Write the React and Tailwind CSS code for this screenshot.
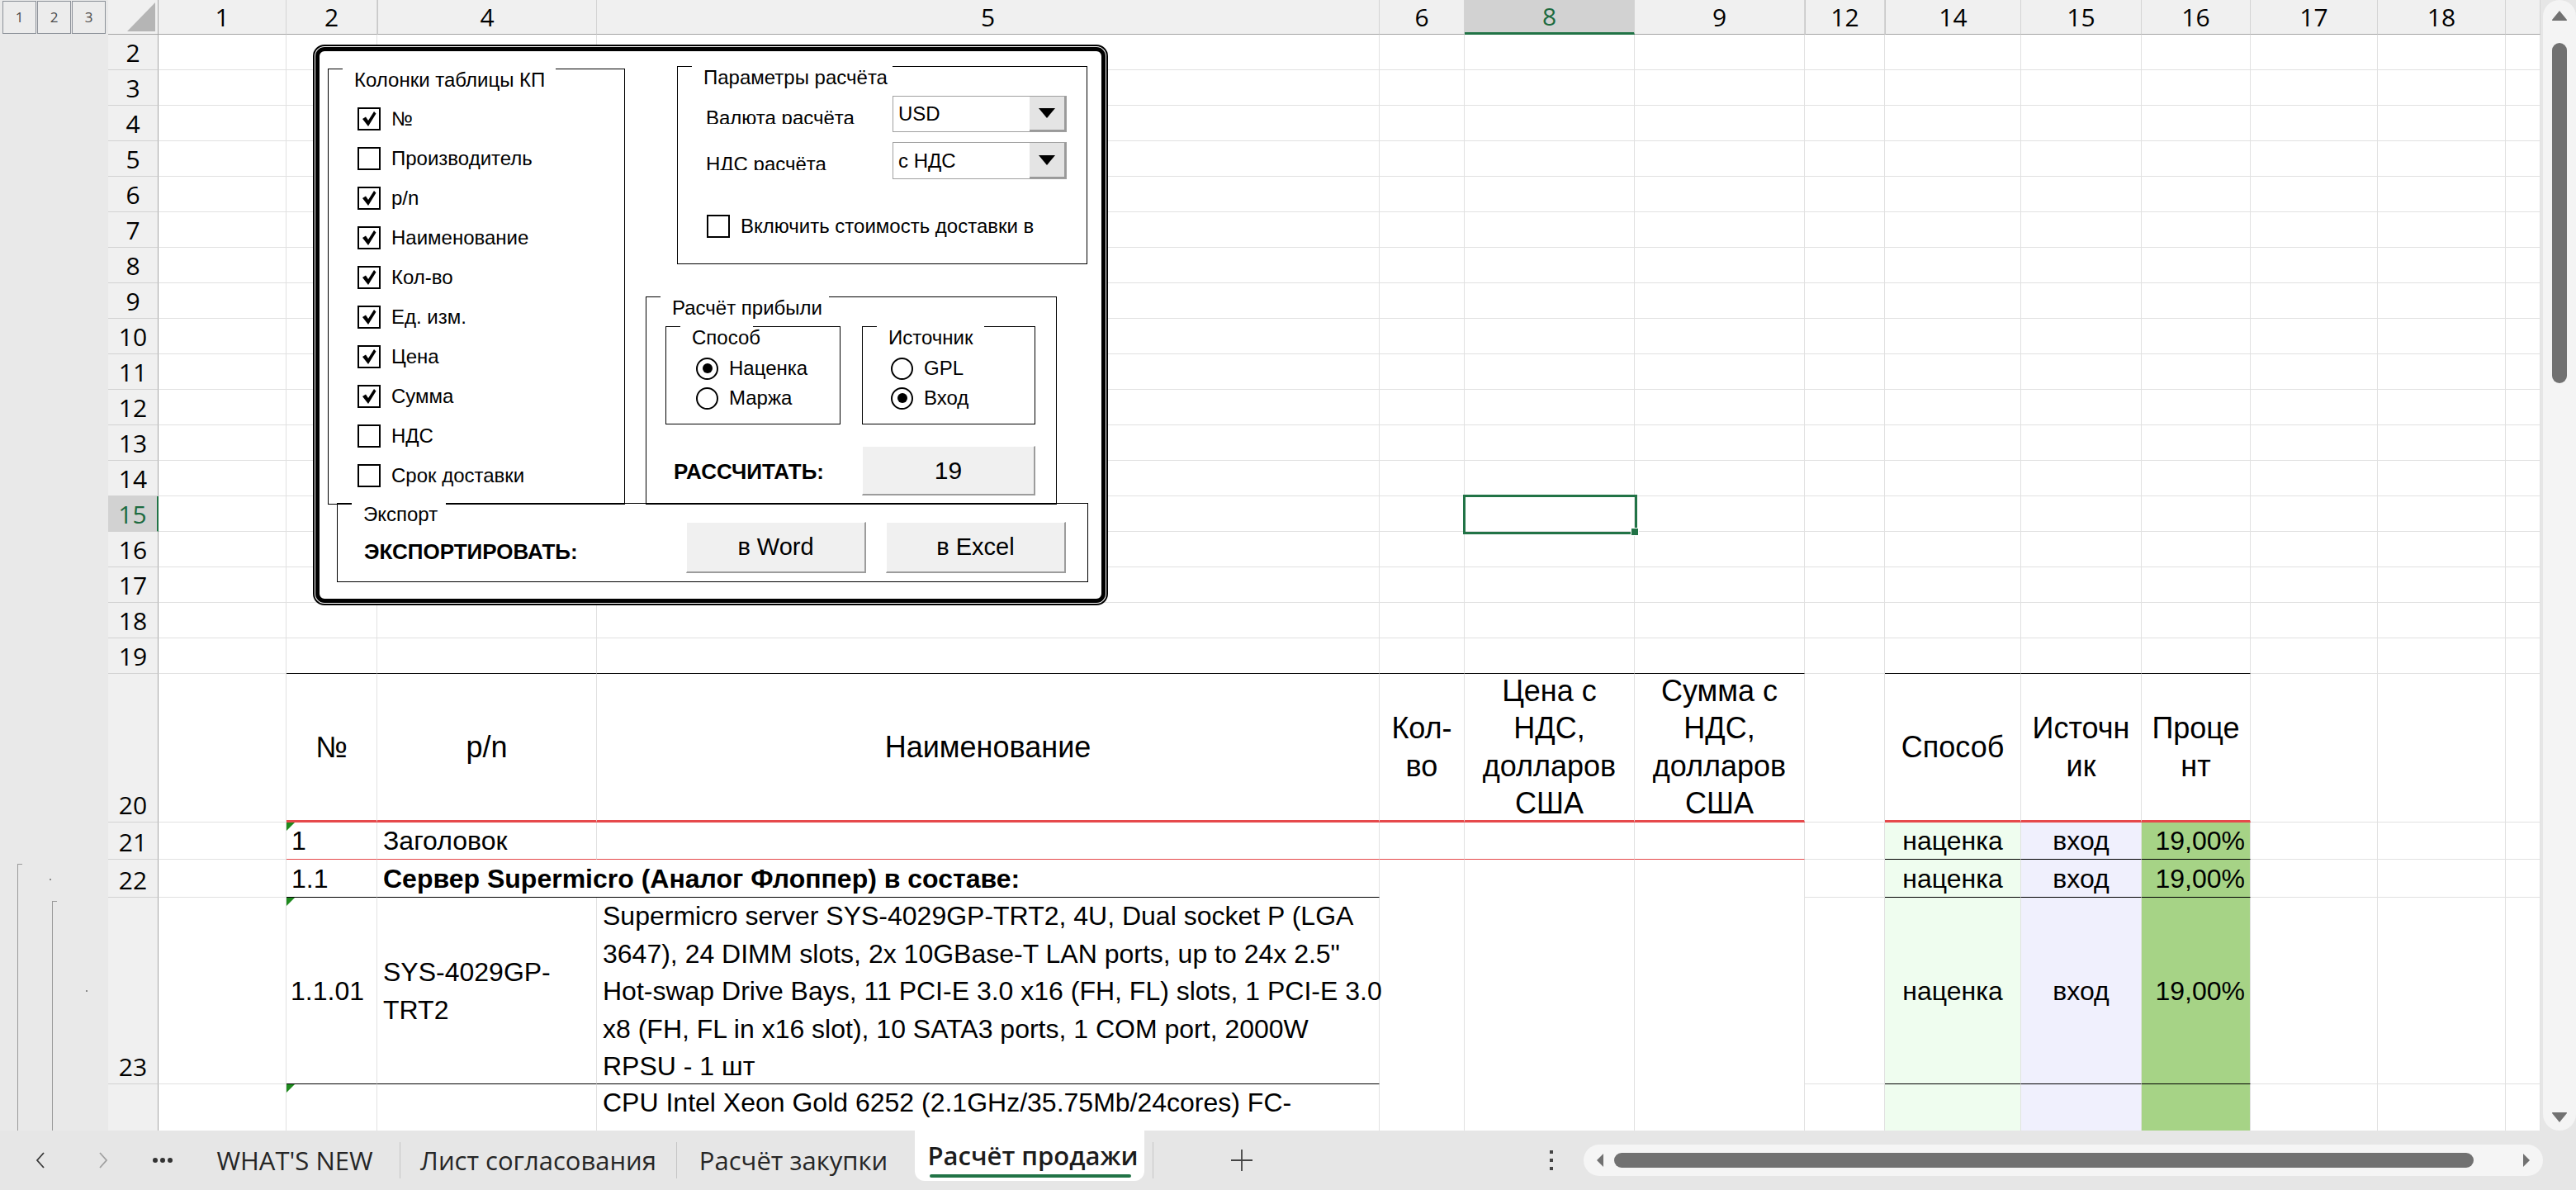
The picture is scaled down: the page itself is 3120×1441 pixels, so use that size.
import React from 'react';

// sheet columns (hidden ones show as a double line in the header)
const COLS = [
  { k: '1', w: 'w-[155px]' },
  { k: '2', w: 'w-[110px]' },
  { k: '4', w: 'w-[266px]', dbl: true },
  { k: '5', w: 'w-[948px]' },
  { k: '6', w: 'w-[103px]' },
  { k: '8', w: 'w-[206px]', sel: true },
  { k: '9', w: 'w-[206px]' },
  { k: '12', w: 'w-[97px]', dbl: true },
  { k: '14', w: 'w-[165px]', dbl: true },
  { k: '15', w: 'w-[146px]' },
  { k: '16', w: 'w-[132px]' },
  { k: '17', w: 'w-[154px]' },
  { k: '18', w: 'w-[155px]' },
  { k: '', w: 'w-[42px]' },
];

const BOTTOM = {
  g: 'border-b border-b-[#e1e1e1]',
  k: 'border-b border-b-black',
  R: 'border-b-[3px] border-b-[#e6494b]',
  r: 'border-b border-b-[#e6494b]',
  n: '',
};

const DATA = "font-['Liberation_Sans',Arial,sans-serif] text-[32px] text-black";

function Flag() {
  return <span className="absolute left-0 top-0 h-0 w-0 border-t-[10px] border-r-[10px] border-t-[#1e8a1e] border-r-transparent" />;
}

function SheetRow({ n, h, cells = {}, head = '' }) {
  return (
    <div className={`flex shrink-0 ${h}`}>
      <div className={`w-[61px] shrink-0 flex items-end justify-center pb-px leading-[38px] border-b border-b-[#d2d2d2] ${head || 'bg-[#f0f0f0] border-r border-r-[#a6a6a6]'}`}>
        {n}
      </div>
      {COLS.map((c, i) => {
        const s = cells[i] || {};
        return (
          <div
            key={i}
            className={`relative shrink-0 ${c.w} ${s.r === 'n' ? '' : 'border-r border-r-[#e1e1e1]'} ${BOTTOM[s.b || 'g']} ${s.cls || ''}`}
          >
            {s.children}
          </div>
        );
      })}
    </div>
  );
}

const hdr = (t) => (
  <div className="flex h-full items-center justify-center text-center font-['Liberation_Sans',Arial,sans-serif] text-[36px] leading-[45.5px] text-black">
    {t}
  </div>
);

const mid = (t, extra = '') => (
  <div className={`flex h-full items-center ${DATA} ${extra}`}>{t}</div>
);

function Check() {
  return (
    <svg width="18" height="20" viewBox="0 0 18 20">
      <polygon points="1,10 5,7.5 8,12 15,1 17.5,3.5 8,19" fill="#000" />
    </svg>
  );
}

function CheckBox({ on }) {
  return (
    <div className="flex h-[28px] w-[28px] shrink-0 items-center justify-center border-2 border-black bg-white">
      {on && <Check />}
    </div>
  );
}

function Radio({ on }) {
  return (
    <div className="flex h-[27px] w-[27px] shrink-0 items-center justify-center rounded-full border-2 border-black bg-white">
      {on && <div className="h-[12px] w-[12px] rounded-full bg-black" />}
    </div>
  );
}

function Frame({ title, tw, className = '', children }) {
  return (
    <div className={`relative border border-black ${className}`}>
      <div className={`absolute -top-px left-[17px] h-[28px] ${tw} bg-white pl-[14px] leading-[28px] whitespace-nowrap`}>
        {title}
      </div>
      {children}
    </div>
  );
}

function Combo({ value, h }) {
  return (
    <div className={`flex w-[211px] ${h} border border-[#a0a0a0] bg-white`}>
      <div className="flex flex-1 items-center pl-[6px]">{value}</div>
      <div className="flex w-[44px] items-center justify-center bg-[#e4e4e4] border-r-2 border-r-[#9a9a9a] border-b-2 border-b-[#9a9a9a]">
        <svg width="20" height="12" viewBox="0 0 20 12">
          <polygon points="0,0 20,0 10,12" fill="#000" />
        </svg>
      </div>
    </div>
  );
}

function Btn({ children, className = '' }) {
  return (
    <div className={`flex items-center justify-center bg-[#f0f0f0] border-t border-t-white border-l border-l-white border-r-2 border-r-[#9c9c9c] border-b-2 border-b-[#9c9c9c] ${className}`}>
      {children}
    </div>
  );
}

const COLUMNS_KP = [
  ['№', true],
  ['Производитель', false],
  ['p/n', true],
  ['Наименование', true],
  ['Кол-во', true],
  ['Ед. изм.', true],
  ['Цена', true],
  ['Сумма', true],
  ['НДС', false],
  ['Срок доставки', false],
];

function Dialog() {
  return (
    <div className="absolute left-[379px] top-[54px] z-20 h-[679px] w-[963px] rounded-[14px] border-2 border-black bg-white p-px font-['Liberation_Sans',Arial,sans-serif] text-[24px] text-black">
      <div className="flex h-full flex-col rounded-[11px] border-[5px] border-black">
        <div className="flex items-start">
          {/* Колонки таблицы КП */}
          <Frame title="Колонки таблицы КП" tw="w-[258px]" className="ml-[10px] mt-[21px] h-[528px] w-[360px]">
            <div className="flex flex-col pl-[35px] pt-[36px]">
              {COLUMNS_KP.map(([label, on]) => (
                <div key={label} className="flex h-[48px] items-center gap-[13px]">
                  <CheckBox on={on} />
                  <span>{label}</span>
                </div>
              ))}
            </div>
          </Frame>

          <div className="ml-[63px] mt-[18px] flex flex-col">
            {/* Параметры расчёта */}
            <Frame title="Параметры расчёта" tw="w-[243px]" className="h-[240px] w-[497px]">
              <div className="flex flex-col pl-[34px] pt-[35px]">
                <div className="flex items-start">
                  <div className="h-[34px] w-[226px] overflow-hidden">
                    <div className="mt-[12px] leading-[30px]">Валюта расчёта</div>
                  </div>
                  <Combo value="USD" h="h-[44px]" />
                </div>
                <div className="mt-[12px] flex items-start">
                  <div className="h-[34px] w-[226px] overflow-hidden">
                    <div className="mt-[12px] leading-[30px]">НДС расчёта</div>
                  </div>
                  <Combo value="с НДС" h="h-[45px]" />
                </div>
                <div className="mt-[39px] flex items-center gap-[13px] pl-px">
                  <CheckBox on={false} />
                  <span className="whitespace-nowrap">Включить стоимость доставки в</span>
                </div>
              </div>
            </Frame>

            {/* Расчёт прибыли */}
            <Frame title="Расчёт прибыли" tw="w-[204px]" className="-ml-[38px] mt-[39px] h-[252px] w-[498px]">
              <div className="flex flex-col pl-[23px] pt-[35px]">
                <div className="flex gap-[26px]">
                  <Frame title="Способ" tw="w-[88px]" className="h-[119px] w-[212px]">
                    <div className="flex flex-col pl-[36px] pt-[32px]">
                      <div className="flex h-[36px] items-center gap-[13px]"><Radio on /><span>Наценка</span></div>
                      <div className="flex h-[36px] items-center gap-[13px]"><Radio /><span>Маржа</span></div>
                    </div>
                  </Frame>
                  <Frame title="Источник" tw="w-[130px]" className="h-[119px] w-[210px]">
                    <div className="flex flex-col pl-[34px] pt-[32px]">
                      <div className="flex h-[36px] items-center gap-[13px]"><Radio /><span>GPL</span></div>
                      <div className="flex h-[36px] items-center gap-[13px]"><Radio on /><span>Вход</span></div>
                    </div>
                  </Frame>
                </div>
                <div className="mt-[26px] flex items-center">
                  <div className="w-[238px] pl-[10px] pt-[2px] text-[26px] font-bold">РАССЧИТАТЬ:</div>
                  <Btn className="h-[60px] w-[210px] text-[30px]">19</Btn>
                </div>
              </div>
            </Frame>
          </div>
        </div>

        {/* Экспорт */}
        <Frame title="Экспорт" tw="w-[114px]" className="-mt-[2px] ml-[21px] h-[96px] w-[910px]">
          <div className="flex items-start pl-[32px] pt-[22px]">
            <div className="mt-[21px] w-[390px] text-[26px] font-bold leading-[30px]">ЭКСПОРТИРОВАТЬ:</div>
            <div className="flex gap-[24px]">
              <Btn className="h-[62px] w-[218px] text-[29px]">в Word</Btn>
              <Btn className="h-[62px] w-[218px] text-[29px]">в Excel</Btn>
            </div>
          </div>
        </Frame>
      </div>
    </div>
  );
}

function bordered(idxs, b) {
  const o = {};
  idxs.forEach((i) => { o[i] = { b }; });
  return o;
}

const TABLE_IDX = [1, 2, 3, 4, 5, 6];
const CALC_IDX = [8, 9, 10];

function Sheet() {
  const plainRows = [];
  for (let n = 2; n <= 19; n++) {
    let cells = {};
    let head = '';
    if (n === 19) cells = bordered([...TABLE_IDX, ...CALC_IDX], 'k');
    if (n === 15) {
      head = 'bg-[#d2d2d2] text-[#1d6b40] border-r-2 border-r-[#217346]';
      cells = {
        5: {
          children: (
            <div className="absolute -left-[2px] -top-[2px] z-10 h-[48px] w-[211px] border-[3px] border-[#217346]">
              <div className="absolute -bottom-[5px] -right-[5px] h-[10px] w-[10px] border border-white bg-[#217346]" />
            </div>
          ),
        },
      };
    }
    plainRows.push(<SheetRow key={n} n={n} h="h-[43px]" cells={cells} head={head} />);
  }

  const green = 'bg-[#effdef]';
  const lav = 'bg-[#f0f0fd]';
  const pct = 'bg-[#a6d386]';

  return (
    <div className="flex w-[2946px] shrink-0 flex-col overflow-hidden font-['Open_Sans',sans-serif] text-[30px] text-black">
      {/* column header */}
      <div className="flex h-[42px] shrink-0 bg-[#f0f0f0]">
        <div className="relative w-[61px] shrink-0 border-r border-r-[#a6a6a6] border-b border-b-[#a5a5a5]">
          <svg className="absolute bottom-[3px] right-[3px]" width="34" height="35" viewBox="0 0 34 35">
            <polygon points="34,0 34,35 0,35" fill="#b5b5b5" />
          </svg>
        </div>
        {COLS.map((c) => (
          <div
            key={c.w + c.k}
            className={`flex shrink-0 items-center justify-center ${c.w} border-r border-r-[#d4d4d4] ${c.dbl ? 'border-l border-l-[#c8c8c8]' : ''} ${c.sel ? 'bg-[#d2d2d2] text-[#1d6b40] border-b-[3px] border-b-[#217346]' : 'border-b border-b-[#a5a5a5]'}`}
          >
            {c.k}
          </div>
        ))}
      </div>

      {plainRows}

      {/* row 20: table header */}
      <SheetRow
        n={20}
        h="h-[180px]"
        cells={{
          1: { b: 'R', children: hdr('№') },
          2: { b: 'R', children: hdr('p/n') },
          3: { b: 'R', children: hdr('Наименование') },
          4: { b: 'R', children: hdr(<>Кол-<br />во</>) },
          5: { b: 'R', children: hdr(<>Цена с<br />НДС,<br />долларов<br />США</>) },
          6: { b: 'R', children: hdr(<>Сумма с<br />НДС,<br />долларов<br />США</>) },
          8: { b: 'R', children: hdr('Способ') },
          9: { b: 'R', children: hdr(<>Источн<br />ик</>) },
          10: { b: 'R', children: hdr(<>Проце<br />нт</>) },
        }}
      />

      {/* row 21 */}
      <SheetRow
        n={21}
        h="h-[45px]"
        cells={{
          1: { b: 'r', children: <><Flag />{mid('1', 'pl-[6px]')}</> },
          2: { b: 'r', children: mid('Заголовок', 'pl-[7px] whitespace-nowrap') },
          3: { b: 'r' },
          4: { b: 'r' },
          5: { b: 'r' },
          6: { b: 'r' },
          8: { b: 'k', cls: green, children: mid('наценка', 'justify-center') },
          9: { b: 'k', cls: lav, children: mid('вход', 'justify-center') },
          10: { b: 'k', cls: pct, children: mid('19,00%', 'justify-end pr-[6px]') },
        }}
      />

      {/* row 22 */}
      <SheetRow
        n={22}
        h="h-[46px]"
        cells={{
          1: { b: 'k', children: mid('1.1', 'pl-[6px]') },
          2: { b: 'k', r: 'n', cls: 'z-[1]', children: mid('Сервер Supermicro (Аналог Флоппер) в составе:', 'pl-[7px] whitespace-nowrap font-bold') },
          3: { b: 'k' },
          4: { b: 'n' },
          5: { b: 'n' },
          6: { b: 'n' },
          8: { b: 'k', cls: green, children: mid('наценка', 'justify-center') },
          9: { b: 'k', cls: lav, children: mid('вход', 'justify-center') },
          10: { b: 'k', cls: pct, children: mid('19,00%', 'justify-end pr-[6px]') },
        }}
      />

      {/* row 23 */}
      <SheetRow
        n={23}
        h="h-[226px]"
        cells={{
          1: { b: 'k', children: <><Flag />{mid('1.1.01', 'pl-[5px]')}</> },
          2: { b: 'k', children: mid(<>SYS-4029GP-<br />TRT2</>, 'pl-[7px] leading-[46px]') },
          3: {
            b: 'k',
            children: (
              <div className={`${DATA} whitespace-nowrap pl-[7px] leading-[45.5px]`}>
                Supermicro server SYS-4029GP-TRT2, 4U, Dual socket P (LGA<br />
                3647), 24 DIMM slots, 2x 10GBase-T LAN ports, up to 24x 2.5"<br />
                Hot-swap Drive Bays, 11 PCI-E 3.0 x16 (FH, FL) slots, 1 PCI-E 3.0<br />
                x8 (FH, FL in x16 slot), 10 SATA3 ports, 1 COM port, 2000W<br />
                RPSU - 1 шт
              </div>
            ),
          },
          4: { b: 'n' },
          5: { b: 'n' },
          6: { b: 'n' },
          8: { b: 'k', cls: green, children: mid('наценка', 'justify-center') },
          9: { b: 'k', cls: lav, children: mid('вход', 'justify-center') },
          10: { b: 'k', cls: pct, children: mid('19,00%', 'justify-end pr-[6px]') },
        }}
      />

      {/* row 24 (cut off by the tab bar; its number sits out of view) */}
      <SheetRow
        n={24}
        h="h-[136px]"
        cells={{
          1: { children: <Flag /> },
          3: {
            children: (
              <div className={`${DATA} whitespace-nowrap pl-[7px] leading-[45.5px]`}>
                CPU Intel Xeon Gold 6252 (2.1GHz/35.75Mb/24cores) FC-
              </div>
            ),
          },
          4: { b: 'n' },
          5: { b: 'n' },
          6: { b: 'n' },
          8: { cls: green },
          9: { cls: lav },
          10: { cls: pct },
        }}
      />
    </div>
  );
}

function Outline() {
  return (
    <div className="flex w-[131px] shrink-0 flex-col bg-[#e9e9e9] font-['Open_Sans',sans-serif]">
      <div className="flex h-[42px] shrink-0 gap-px pl-[3px] pt-px">
        {['1', '2', '3'].map((n) => (
          <div key={n} className="flex h-[40px] w-[41px] items-center justify-center border border-[#8c9199] bg-[#ececec] text-[17px] text-[#4a4a4a]">
            {n}
          </div>
        ))}
      </div>
      <div className="h-[1004px] shrink-0" />
      <div className="relative flex flex-1">
        <div className="ml-[21px] w-[6px] border-l border-t border-[#9a9a9a]" />
        <div className="ml-[36px] mt-[45px] w-[6px] border-l border-t border-[#9a9a9a]" />
        <span className="absolute left-[60px] top-[18px] h-[2px] w-[2px] bg-[#8a8a8a]" />
        <span className="absolute left-[104px] top-[153px] h-[2px] w-[2px] bg-[#8a8a8a]" />
      </div>
    </div>
  );
}

function VScroll() {
  return (
    <div className="w-[43px] shrink-0 bg-[#e6e6e6] pl-[3px]">
      <div className="flex h-full flex-col items-center rounded-[20px] bg-[#f4f4f4]">
        <svg className="mt-[12px]" width="20" height="14" viewBox="0 0 20 14">
          <path d="M10 1 L19 12 Q19.5 13 18 13 L2 13 Q0.5 13 1 12 Z" fill="#717171" />
        </svg>
        <div className="mt-[26px] h-[412px] w-[18px] rounded-full bg-[#717171]" />
        <div className="flex-1" />
        <svg className="mb-[9px]" width="20" height="14" viewBox="0 0 20 14">
          <path d="M10 13 L19 2 Q19.5 1 18 1 L2 1 Q0.5 1 1 2 Z" fill="#717171" />
        </svg>
      </div>
    </div>
  );
}

function TabBar() {
  const sep = <div className="h-[44px] w-px shrink-0 bg-[#c6c6c6]" />;
  return (
    <div className="flex h-[72px] shrink-0 items-center bg-[#e6e6e6] font-['Open_Sans',sans-serif] text-[31px] text-[#262626]">
      <svg className="ml-[42px] shrink-0" width="14" height="22" viewBox="0 0 14 22">
        <polyline points="11,2 3,11 11,20" fill="none" stroke="#3a3a3a" strokeWidth="1.8" />
      </svg>
      <svg className="ml-[62px] shrink-0" width="14" height="22" viewBox="0 0 14 22">
        <polyline points="3,2 11,11 3,20" fill="none" stroke="#a0a0a0" strokeWidth="1.8" />
      </svg>
      <svg className="ml-[52px] shrink-0" width="26" height="8" viewBox="0 0 26 8">
        <circle cx="4" cy="4" r="3" fill="#333" />
        <circle cx="13" cy="4" r="3" fill="#333" />
        <circle cx="22" cy="4" r="3" fill="#333" />
      </svg>
      <div className="ml-[20px] flex w-[254px] shrink-0 justify-center whitespace-nowrap">WHAT'S NEW</div>
      {sep}
      <div className="flex w-[334px] shrink-0 justify-center whitespace-nowrap">Лист согласования</div>
      {sep}
      <div className="flex w-[282px] shrink-0 justify-center whitespace-nowrap">Расчёт закупки</div>
      <div className="relative ml-[6px] flex h-[61px] w-[278px] shrink-0 items-center justify-center self-start whitespace-nowrap rounded-b-[12px] bg-white pl-[8px] font-semibold text-[#1c1c1c]">
        Расчёт продажи
        <div className="absolute bottom-[4px] left-[18px] right-[16px] h-[4px] rounded-full bg-[#217346]" />
      </div>
      <div className="ml-[10px]">{sep}</div>
      <svg className="ml-[93px] shrink-0" width="28" height="28" viewBox="0 0 28 28">
        <path d="M14 1 V27 M1 14 H27" stroke="#444" strokeWidth="1.8" />
      </svg>
      <div className="ml-[359px] flex h-[24px] w-[4px] shrink-0 flex-col justify-between">
        <span className="h-[4px] w-[4px] bg-[#444]" />
        <span className="h-[4px] w-[4px] bg-[#444]" />
        <span className="h-[4px] w-[4px] bg-[#444]" />
      </div>
      <div className="ml-[37px] flex h-[38px] w-[1162px] shrink-0 items-center rounded-full bg-[#f5f5f5]">
        <svg className="ml-[15px]" width="10" height="18" viewBox="0 0 10 18">
          <path d="M1 9 L9 1 V17 Z" fill="#717171" />
        </svg>
        <div className="ml-[12px] h-[18px] w-[1041px] rounded-full bg-[#717171]" />
        <svg className="ml-[59px]" width="10" height="18" viewBox="0 0 10 18">
          <path d="M9 9 L1 1 V17 Z" fill="#717171" />
        </svg>
      </div>
    </div>
  );
}

export default function App() {
  return (
    <div className="relative flex h-[1441px] w-[3120px] flex-col overflow-hidden bg-white">
      <div className="flex h-[1369px] shrink-0 overflow-hidden">
        <Outline />
        <Sheet />
        <VScroll />
      </div>
      <TabBar />
      <Dialog />
    </div>
  );
}
